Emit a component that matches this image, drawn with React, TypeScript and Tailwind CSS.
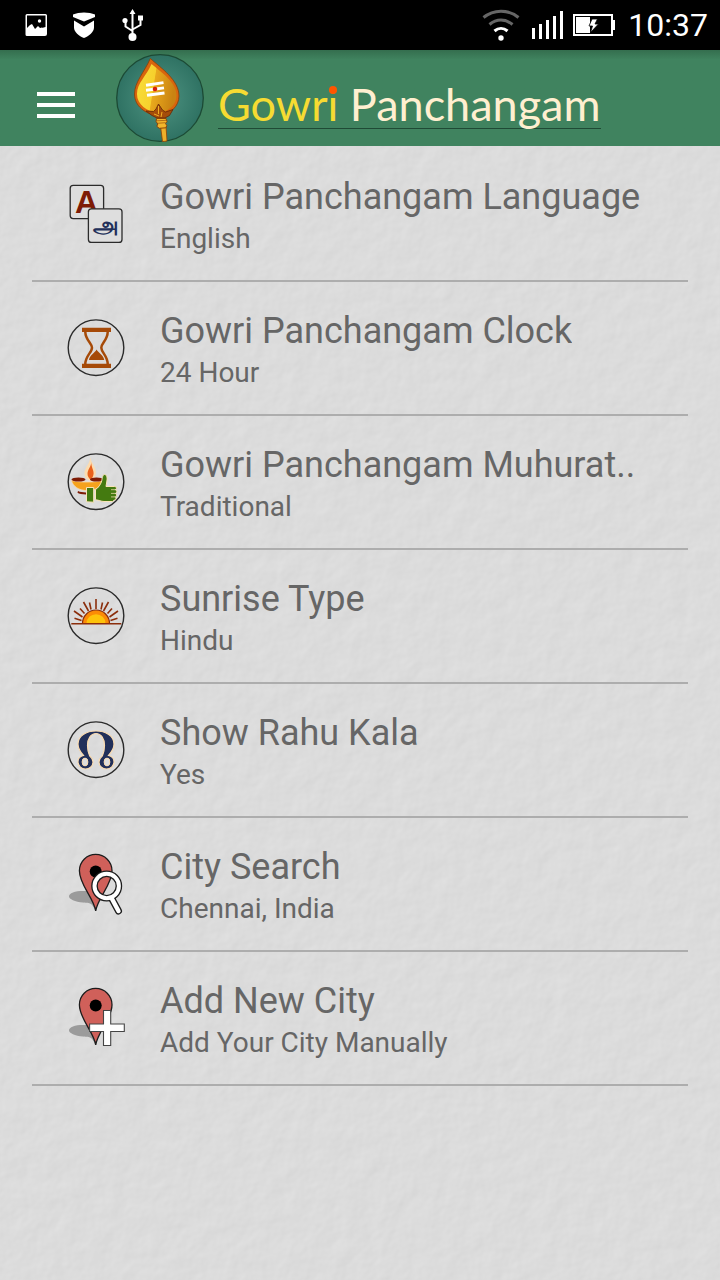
import React from 'react';

type IconProps = { children: React.ReactNode };

function RowIcon({ children }: IconProps) {
  return (
    <svg viewBox="0 0 64 64" className="size-16 shrink-0" fill="none" aria-hidden="true">
      {children}
    </svg>
  );
}

function Ring() {
  return <circle cx="32" cy="31.7" r="27.8" stroke="#2b2b2b" strokeWidth="1.4" />;
}

function LanguageIcon() {
  return (
    <RowIcon>
      <rect x="6.2" y="3.4" width="33.4" height="33.2" rx="3" fill="#dedede" stroke="#2b2b2b" strokeWidth="1.3" />
      <text x="11" y="31" fontSize="32" fontWeight="bold" fill="#7e1b05" fontFamily="Liberation Sans, sans-serif">
        A
      </text>
      <rect x="24.4" y="26.8" width="33.6" height="33.6" rx="3" fill="#dedede" stroke="#2b2b2b" strokeWidth="1.3" />
      <text x="41.500" y="51" textAnchor="middle" fontSize="23" fontWeight="bold" fill="#22305a" fontFamily="Noto Sans, sans-serif">
        அ
      </text>
    </RowIcon>
  );
}

function ClockIcon() {
  return (
    <RowIcon>
      <Ring />
      <path d="M18 11.700h29v4.300H18zM18 47.700h29V52H18z" fill="#a64a08" />
      <path
        d="M21.300 16c0 8 6.700 11 6.700 15.700S21.300 40 21.300 48M43.700 16c0 8-6.400 11-6.400 15.700S43.700 40 43.700 48"
        stroke="#a64a08"
        strokeWidth="2.500"
      />
      <path d="M32.600 33.500c1.400 3 7.400 6 7.600 10.500H25c.2-4.500 6.200-7.500 7.600-10.500z" fill="#a64a08" />
    </RowIcon>
  );
}

function MuhuratIcon() {
  return (
    <RowIcon>
      <Ring />
      <path d="M26.300 7c.8 6 5.600 10 5.600 15.500 0 4-2 7-5.200 8.500-4-1.500-6.200-4-6.200-8C20.500 17.500 26 14 26.300 7z" fill="#fbdcb0" />
      <path d="M27.300 12c-.3 5 2.500 7.600 2.300 11.500-.1 2.400-1.300 4.600-3 6.200-1.700-1.500-3.200-3.600-3.100-6.300.2-4 3.600-6.400 3.800-11.400z" fill="#e9611c" />
      <path d="M7.500 30.500c4 1 9 1.500 15.500 1.500s11.500-.5 16-1.500c-1.500 6-7 10-15.700 10S9 36.500 7.500 30.500z" fill="#f5a21d" stroke="#fbdcb0" strokeWidth=".8" />
      <ellipse cx="14.500" cy="29.500" rx="7" ry="2" fill="#7e1b05" />
      <ellipse cx="32.500" cy="29.500" rx="6.500" ry="2" fill="#7e1b05" />
      <path d="M14 41c2 1 5 1.400 8 1.500v2c-4 0-7-.7-8.500-1.700z" fill="#7e1b05" />
      <path d="M22.500 37.500h7.200v14.700l-7.200-.4z" fill="#447a10" stroke="#fbe3b8" strokeWidth="1" />
      <path
        d="M31.500 39.500c2.800-1.500 5.500-5.500 6.300-9 .5-2.400.8-6 2.700-6 2.400 0 2.900 3.500 2.400 6.500L42 36.500h8.700c2.200 0 2.200 3 .6 3.200 2 .2 2 3.500.1 3.700 1.700.4 1.500 3.300-.2 3.500 1.300.6 1 3.200-.8 3.200L48.500 51.500H40c-3 0-5-1.500-8.500-1.700z"
        fill="#447a10"
        stroke="#fbe3b8"
        strokeWidth="1"
      />
      <path d="M47 39.700h4.500M47 43.400h4.500M47 46.900h4" stroke="#fbe3b8" strokeWidth=".7" />
    </RowIcon>
  );
}

function SunriseIcon() {
  return (
    <RowIcon>
      <Ring />
      <path
        d="M32 25V15M37 25.500l1.500-7M27 25.500l-1.500-7M39.500 27l5-9M24.500 27l-5-9M43.500 29.500l4.500-5M20.500 29.500L16 24.500M45.500 33l8.500-6M18.500 33L10 27M46.500 36.500l7-2.200M17.500 36.500L10.500 34.300"
        stroke="#8b2e0c"
        strokeWidth="1.600"
      />
      <path d="M18.500 39.500a13.500 13.500 0 0 1 27 0z" fill="#fb8b06" stroke="#8b2e0c" strokeWidth="1.200" />
      <path d="M22.500 39.200a9.500 9 0 0 1 19 0z" fill="#fdc30b" />
      <path d="M7.300 39.700h50" stroke="#8b2e0c" strokeWidth="1.600" />
    </RowIcon>
  );
}

function RahuIcon() {
  return (
    <RowIcon>
      <Ring />
      <path
        d="M19.500 37.500C15.500 33 14 29.500 14 26 14 18 22 13 32 13s18 5 18 13c0 3.500-1.500 7-5.500 11.500 3.500.8 5.500 3.300 5.500 6.200 0 4.200-3.200 7.300-7.500 7.300S35 48 35 44c0-3 1.600-4.600 3.400-6.200 1.300-3 2.100-6.200 2.100-10.300 0-7-3.500-12-8.500-12s-8.500 5-8.500 12c0 4.100.8 7.300 2.100 10.300 1.800 1.600 3.400 3.200 3.400 6.200 0 4-3.200 7-7.500 7s-7.500-3.100-7.500-7.300c0-2.900 2-5.400 5.500-6.200z"
        fill="#22305a"
        stroke="#fbdcb0"
        strokeWidth="1.200"
      />
      <g fill="#dedede" stroke="#fbdcb0" strokeWidth="1">
        <ellipse cx="21" cy="44" rx="2.900" ry="3.900" />
        <ellipse cx="43" cy="44" rx="2.900" ry="3.900" />
      </g>
    </RowIcon>
  );
}

function Pin() {
  return (
    <>
      <path d="M31.700 59C27 50 27 51.500 19 50.500 11 50 5 47 5 44.500c0-3.500 6-5.500 14-5.500 6 0 12 1.500 13 4z" fill="#9b9b9b" />
      <path
        d="M31.700 59C30 46 15.400 33 15.400 18.700a16.300 16.300 0 0 1 32.600 0C48 33 33.400 46 31.700 59z"
        fill="#d0605a"
        stroke="#1c1c1c"
        strokeWidth="1.300"
      />
      <circle cx="31.700" cy="19.500" r="6" fill="#000" />
    </>
  );
}

function CitySearchIcon() {
  return (
    <RowIcon>
      <Pin />
      <path d="M48 47l6.500 12" stroke="#1c1c1c" strokeWidth="7" strokeLinecap="round" />
      <circle cx="42.700" cy="34" r="12.200" stroke="#1c1c1c" strokeWidth="6.600" />
      <circle cx="42.700" cy="34" r="12.200" stroke="#fff" strokeWidth="4" />
      <path d="M47.500 46l7 13" stroke="#fff" strokeWidth="4.400" strokeLinecap="round" />
    </RowIcon>
  );
}

function AddCityIcon() {
  return (
    <RowIcon>
      <Pin />
      <path
        d="M39.500 24.500h7.200V38h13.600v7.500H46.700v14h-7.200v-14H25.600V38h13.900z"
        fill="#fff"
        stroke="#444"
        strokeWidth="1.100"
      />
    </RowIcon>
  );
}

function VelLogo() {
  return (
    <svg viewBox="0 0 88 88" className="size-[88px] shrink-0" fill="none" aria-hidden="true">
      <defs>
        <radialGradient id="disc">
          <stop offset="0" stopColor="#4f9482" />
          <stop offset="1" stopColor="#2f7263" />
        </radialGradient>
        <linearGradient id="blade" x1="0" x2="1" y1="0" y2=".2">
          <stop offset=".1" stopColor="#f8dc38" />
          <stop offset=".48" stopColor="#f6d02c" />
          <stop offset=".5" stopColor="#e9a91d" />
          <stop offset="1" stopColor="#c98312" />
        </linearGradient>
      </defs>
      <circle cx="44" cy="44" r="43.300" fill="url(#disc)" stroke="#1c4a35" strokeWidth="1.300" />
      <path
        d="M34.300 4.500C45 14 63 26 63 42c0 10-8 18-20.500 20C29 60 18.500 52 18.500 40c0-12 10-22 15.800-35.500z"
        fill="#d9650d"
        stroke="#8a3d08"
        strokeWidth=".8"
      />
      <path d="M35.500 10C45 18 60.500 28 60.500 41.500c0 9-7 15.500-18 18C31 57 21 51 21 40c0-11 9.500-18 14.500-30z" fill="url(#blade)" />
      <path d="M30 31.200l17.500-2.600M30 36.300l18-2.400M31 41.300l17.500-2.300" stroke="#fff" strokeWidth="2.900" />
      <circle cx="39" cy="35" r="2.300" fill="#d8200d" />
      <path
        d="M42.500 50l4 6 3 2 7.500-2.500-3.500 6-4.500 2.500h-8L36 61.500 30 57l7.500.5 2.500-2.500z"
        fill="#a54d0a"
        stroke="#642606"
        strokeWidth=".8"
      />
      <path d="M42.500 52v8M46 58l-1 5M38 60l5 2" stroke="#f0ae24" strokeWidth="1" />
      <path d="M44.500 72h5.500l1 15c-1.500.4-3 .5-4.500.5z" fill="#eeb02a" stroke="#8a4308" strokeWidth=".8" />
      <path
        d="M40.500 64.500h9.500l1 3-1.500 2 1.300 2-1 2.300-6.600.5-2.400-2 1-2.300-1.700-2.500z"
        fill="#f2b72c"
        stroke="#8a4308"
        strokeWidth="1"
      />
      <path d="M41.500 69.300l8-.6M41 66.800l9-.5" stroke="#a65c0c" strokeWidth=".8" />
    </svg>
  );
}

function StatusBar() {
  return (
    <div className="flex h-[50px] items-center justify-between bg-black pl-6 pr-3 text-white">
      <div className="flex items-center gap-6" aria-hidden="true">
        <svg viewBox="0 0 24 24" className="size-6">
          <path
            fillRule="evenodd"
            fill="#fff"
            d="M3 1h18.500a1.500 1.500 0 0 1 1.500 1.500V21a2 2 0 0 1-2 2H3a1.500 1.500 0 0 1-1.500-1.500v-19A1.500 1.500 0 0 1 3 1zm0 1.500v15l4-5.500 4 5 3-3 2 1.500 5.500-1.500V2.500z"
          />
          <path d="M2 16l4-4 2-1 3 5 3-3 2 2 2-.5 4 4V22H2z" fill="#fff" />
          <circle cx="15.500" cy="8" r="1.700" fill="#fff" />
        </svg>
        <svg viewBox="0 0 24 28" className="h-7 w-6" fill="#fff">
          <path d="M1 3.500C7 .7 17 .7 23 3.500V6l-11 4.500L1 6z" />
          <path d="M2 9.500l10 6 10-6v7c0 4.500-5 8.500-10 10.500C7 25 2 21 2 16.500z" />
        </svg>
        <svg viewBox="0 0 24 34" className="h-[34px] w-6" fill="none" stroke="#fff" strokeWidth="2">
          <path d="M12.500 29V4M12.500 23L5.500 18.500V13M12.500 21.500l8-4.500V10" />
          <path d="M12.500 1L9.500 6h6zM18 7.500h5v5h-5z" fill="#fff" stroke="none" />
          <circle cx="5" cy="12.500" r="2.600" fill="#fff" stroke="none" />
          <circle cx="12.500" cy="29" r="4" fill="#fff" stroke="none" />
        </svg>
      </div>
      <div className="flex items-center">
        <svg viewBox="0 0 38 34" className="mr-3 h-[34px] w-[38px]" fill="none" strokeWidth="3" aria-hidden="true">
          <path d="M1.500 9.500c10-8.500 25-8.500 35 0M7.500 16.500c7-6 16-6 23 0" stroke="#666" />
          <path d="M12.500 23c4-3.500 9-3.500 13 0" stroke="#fff" />
          <circle cx="19" cy="30" r="2.700" fill="#fff" />
        </svg>
        <svg viewBox="0 0 32 28" className="mr-2 h-7 w-8" fill="#fff" aria-hidden="true">
          <path d="M0 17h3v11H0zM7 13h3v15H7zM14 9h3v19h-3zM21 5h3v23h-3zM28 0h3v28h-3z" />
        </svg>
        <svg viewBox="0 0 44 22" className="mr-3 h-[22px] w-11" fill="none" aria-hidden="true">
          <path d="M2 1h38v20H2z" stroke="#fff" strokeWidth="2" />
          <path d="M41 6h2v10h-2zM4 3h14v16H4z" fill="#fff" />
          <path d="M20 5h5.500L23 10h3.500L18.500 18.500 20.500 12H17z" fill="#fff" stroke="#000" strokeWidth=".8" />
        </svg>
        <time className="text-[32px] leading-none">10:37</time>
      </div>
    </div>
  );
}

function AppHeader() {
  return (
    <header className="flex h-24 items-center bg-[#40835f] bg-linear-to-b from-[#346e4e] to-[#40835f] to-10% pl-[37px]">
      <button type="button" aria-label="Menu" className="mr-[41px] mt-[14px] flex w-[38px] flex-col gap-[7px]">
        <span className="h-1 w-full bg-white" />
        <span className="h-1 w-full bg-white" />
        <span className="h-1 w-full bg-white" />
      </button>
      <VelLogo />
      <h1 className="ml-[14px] mt-3 border-b border-[#1f4a35] font-[Lato,sans-serif] text-[45px] leading-[48px] text-[#ffefd0]">
        <span className="text-[#f6db32]">
          Gowr
          <span className="relative after:absolute after:left-1/2 after:top-[9px] after:size-2 after:-translate-x-1/2 after:rounded-full after:bg-[#ff5500]">
            i
          </span>
        </span>{' '}
        Panchangam
      </h1>
    </header>
  );
}

const SETTINGS = [
  { title: 'Gowri Panchangam Language', value: 'English', icon: <LanguageIcon /> },
  { title: 'Gowri Panchangam Clock', value: '24 Hour', icon: <ClockIcon /> },
  { title: 'Gowri Panchangam Muhurat..', value: 'Traditional', icon: <MuhuratIcon /> },
  { title: 'Sunrise Type', value: 'Hindu', icon: <SunriseIcon /> },
  { title: 'Show Rahu Kala', value: 'Yes', icon: <RahuIcon /> },
  { title: 'City Search', value: 'Chennai, India', icon: <CitySearchIcon /> },
  { title: 'Add New City', value: 'Add Your City Manually', icon: <AddCityIcon /> },
];

// Embossed paper grain behind the list
function PaperTexture() {
  return (
    <svg className="absolute inset-0 -z-10 size-full" aria-hidden="true">
      <filter id="paper" x="0" y="0" width="100%" height="100%" colorInterpolationFilters="sRGB">
        <feTurbulence type="fractalNoise" baseFrequency="0.05" numOctaves="3" seed="4" />
        <feDiffuseLighting lightingColor="#dcdcdc" surfaceScale="0.25" diffuseConstant="1.12">
          <feDistantLight azimuth="225" elevation="63" />
        </feDiffuseLighting>
      </filter>
      <rect width="100%" height="100%" filter="url(#paper)" />
    </svg>
  );
}

export default function App() {
  return (
    <div className="flex min-h-screen flex-col bg-[#dcdcdc] font-[Roboto,sans-serif]">
      <StatusBar />
      <AppHeader />

      <main className="relative isolate flex-1 px-8 pt-[2px]">
        <PaperTexture />
        <ul>
          {SETTINGS.map((item) => (
            <li key={item.title} className="border-b-2 border-[#adadad]">
              <button type="button" className="flex h-[132px] w-full items-center gap-8 pl-8 text-left text-[#666]">
                {item.icon}
                <span className="flex min-w-0 flex-col pt-1">
                  <span className="truncate text-[36px] leading-[46px]">{item.title}</span>
                  <span className="truncate text-[28px] leading-[38px]">{item.value}</span>
                </span>
              </button>
            </li>
          ))}
        </ul>
      </main>
    </div>
  );
}
